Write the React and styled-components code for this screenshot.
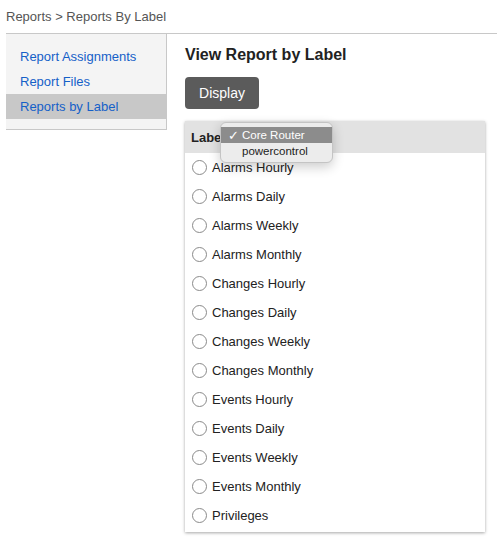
import React from "react";
import styled, { createGlobalStyle } from "styled-components";

const GlobalStyle = createGlobalStyle`
  body {
    margin: 0;
    background: #fff;
    font-family: "Liberation Sans", Arial, sans-serif;
  }
`;

const Page = styled.div`
  width: 497px;
  height: 542px;
  overflow: hidden;
`;

const Breadcrumb = styled.div`
  height: 33px;
  padding-left: 6px;
  font-size: 13px;
  line-height: 33px;
  color: #555;
`;

const Layout = styled.div`
  display: flex;
  margin-left: 6px;
  border-top: 1px solid #c8c8c8;
`;

const Sidebar = styled.nav`
  width: 160px;
  padding: 10px 0 10px;
  background: #f4f4f4;
  border-right: 1px solid #c8c8c8;
  border-bottom: 1px solid #c8c8c8;
  align-self: flex-start;
`;

const NavItem = styled.a`
  display: block;
  height: 25px;
  padding-left: 14px;
  font-size: 13px;
  line-height: 25px;
  color: #1560c8;
  text-decoration: none;
  background: ${(p) => (p.$active ? "#c8c8c8" : "transparent")};
`;

const Main = styled.main`
  flex: 1;
  padding: 11px 11px 0 18px;
`;

const Title = styled.h2`
  margin: 0;
  font-size: 16px;
  line-height: 20px;
  font-weight: bold;
  color: #222;
`;

const Button = styled.button`
  margin-top: 12px;
  width: 74px;
  height: 32px;
  border: none;
  border-radius: 4px;
  background: #5b5b5b;
  color: #fff;
  font-family: inherit;
  font-size: 14px;
`;

const Card = styled.div`
  position: relative;
  margin-top: 12px;
  width: 300px;
  background: #fff;
  box-shadow: 0 1px 3px rgba(0, 0, 0, 0.35);
  padding-bottom: 2px;
`;

const CardHeader = styled.div`
  height: 32px;
  padding-left: 6px;
  display: flex;
  align-items: center;
  background: #e2e2e2;
  font-size: 13px;
  font-weight: bold;
  color: #222;
`;

const Menu = styled.div`
  position: absolute;
  left: 35px;
  top: 1px;
  width: 111px;
  padding: 4px 0 3px;
  background: #ececec;
  border: 1px solid #c4c4c4;
  border-radius: 6px;
  box-shadow: 0 4px 12px rgba(0, 0, 0, 0.2);
  z-index: 2;
`;

const MenuItem = styled.div`
  display: flex;
  height: 16px;
  align-items: center;
  font-size: 11.5px;
  color: ${(p) => (p.$selected ? "#fff" : "#222")};
  background: ${(p) => (p.$selected ? "#8c8c8c" : "transparent")};
`;

const Check = styled.span`
  width: 21px;
  text-align: right;
  padding-right: 3px;
  box-sizing: border-box;
  font-size: 13px;
`;

const List = styled.div`
  display: flex;
  flex-direction: column;
`;

const Option = styled.label`
  display: flex;
  align-items: center;
  gap: 5px;
  height: 29px;
  padding-left: 7px;
  font-size: 13px;
  color: #222;
`;

const Radio = styled.span`
  width: 13px;
  height: 13px;
  border-radius: 50%;
  border: 1px solid #8a8a8a;
  background: #fff;
  flex-shrink: 0;
`;

const reports = [
  "Alarms Hourly",
  "Alarms Daily",
  "Alarms Weekly",
  "Alarms Monthly",
  "Changes Hourly",
  "Changes Daily",
  "Changes Weekly",
  "Changes Monthly",
  "Events Hourly",
  "Events Daily",
  "Events Weekly",
  "Events Monthly",
  "Privileges",
];

export default function App() {
  return (
    <Page>
      <GlobalStyle />
      <Breadcrumb>Reports &gt; Reports By Label</Breadcrumb>
      <Layout>
        <Sidebar>
          <NavItem>Report Assignments</NavItem>
          <NavItem>Report Files</NavItem>
          <NavItem $active>Reports by Label</NavItem>
        </Sidebar>
        <Main>
          <Title>View Report by Label</Title>
          <Button>Display</Button>
          <Card>
            <CardHeader>Label</CardHeader>
            <Menu>
              <MenuItem $selected>
                <Check>✓</Check>Core Router
              </MenuItem>
              <MenuItem>
                <Check />powercontrol
              </MenuItem>
            </Menu>
            <List>
              {reports.map((r) => (
                <Option key={r}>
                  <Radio />
                  {r}
                </Option>
              ))}
            </List>
          </Card>
        </Main>
      </Layout>
    </Page>
  );
}
